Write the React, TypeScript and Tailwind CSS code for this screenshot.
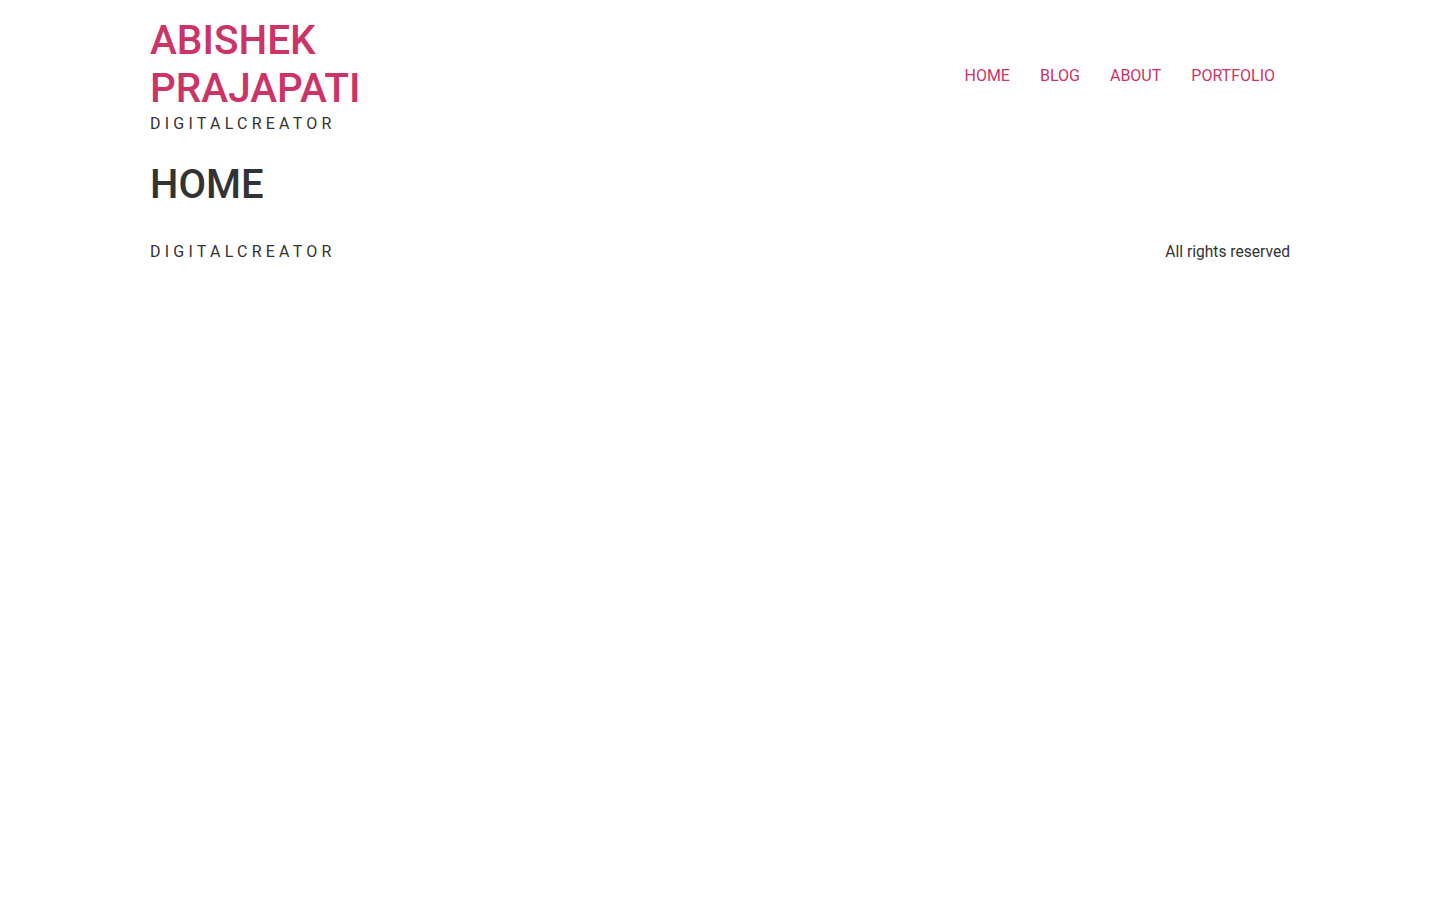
const links = ["HOME", "BLOG", "ABOUT", "PORTFOLIO"]

const App = () => {
  return (
    <div className="min-h-screen bg-white text-[#333333] font-['Roboto',sans-serif]">
      <div className="mx-auto max-w-[1140px]">
        {/* header */}
        <header className="flex items-center justify-between pt-[16px]">
          <div>
            <h1 className="text-[40.5px] leading-[48px] font-medium text-[#cc3366] w-[260px]">ABISHEK PRAJAPATI</h1>
            <p className="text-base leading-6 tracking-[0.265em] text-[#333333]">DIGITALCREATOR</p>
          </div>
          <nav className="flex">
            {links.map((l) => (
              <a key={l} href="#" className="px-[15px] text-base leading-6 text-[#cc3366]">
                {l}
              </a>
            ))}
          </nav>
        </header>
        {/* main */}
        <main className="mt-[25px]">
          <h2 className="text-[40px] leading-[48px] font-medium text-[#333333]">HOME</h2>
        </main>
        {/* footer */}
        <footer className="mt-[31px] flex items-center justify-between">
          <p className="text-base leading-6 tracking-[0.265em]">DIGITALCREATOR</p>
          <p className="text-[15.6px] leading-6">All rights reserved</p>
        </footer>
      </div>
    </div>
  )
}

export default App
